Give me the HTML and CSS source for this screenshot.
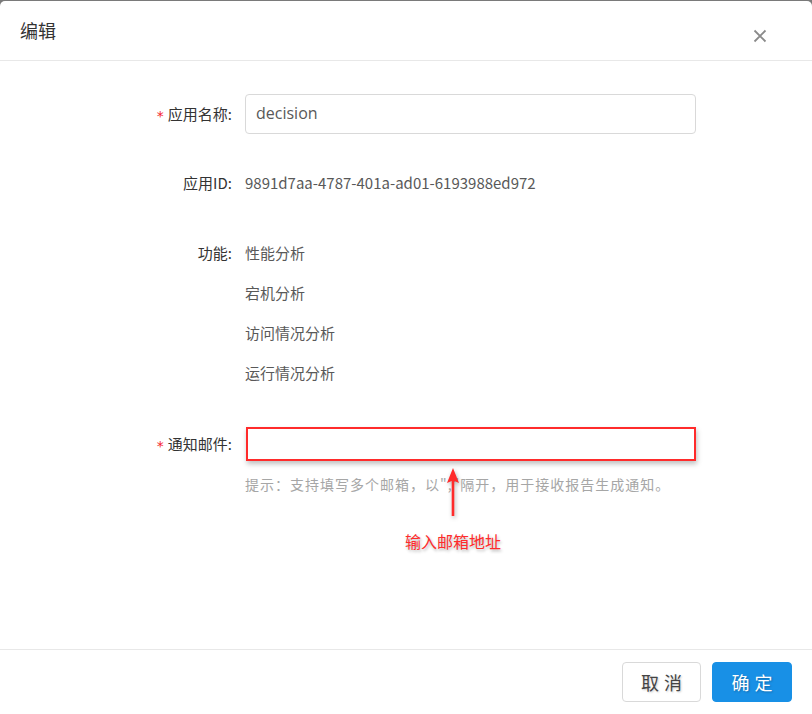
FILE: index.html
```html
<!DOCTYPE html>
<html lang="zh">
<head>
<meta charset="utf-8">
<link rel="stylesheet" href="styles.css">
</head>
<body>
<div class="dialog">
  <div class="header">
    <div class="title">编辑</div>
    <div class="close">
      <svg width="14" height="14" viewBox="0 0 14 14"><path d="M1.5 1.5 L12.5 12.5 M12.5 1.5 L1.5 12.5" stroke="#8a8a8a" stroke-width="1.8" fill="none"/></svg>
    </div>
  </div>
  <div class="body">
    <div class="row row-name">
      <div class="label"><span class="req">*</span>应用名称:</div>
      <div class="field"><div class="input">decision</div></div>
    </div>
    <div class="row row-id">
      <div class="label">应用ID:</div>
      <div class="field value">9891d7aa-4787-401a-ad01-6193988ed972</div>
    </div>
    <div class="row row-func">
      <div class="label">功能:</div>
      <div class="field list">
        <div class="item">性能分析</div>
        <div class="item">宕机分析</div>
        <div class="item">访问情况分析</div>
        <div class="item">运行情况分析</div>
      </div>
    </div>
    <div class="row row-mail">
      <div class="label"><span class="req">*</span>通知邮件:</div>
      <div class="field">
        <div class="input input-red"></div>
        <div class="hint">提示：支持填写多个邮箱，以","隔开，用于接收报告生成通知。</div>
        <div class="annot">
          <svg class="arrow" width="20" height="50" viewBox="0 0 20 50"><path d="M10 1 L16 16 L11.3 14 L11.3 49 L8.7 49 L8.7 14 L4 16 Z" fill="#ff2b2b"/></svg>
          <div class="annot-text">输入邮箱地址</div>
        </div>
      </div>
    </div>
  </div>
  <div class="footer">
    <button class="btn btn-cancel">取消</button>
    <button class="btn btn-ok">确定</button>
  </div>
</div>
</body>
</html>
```
FILE: styles.css
```css
html, body {
  margin: 0;
  padding: 0;
  background: #7a7a7a;
  height: 714px;
  overflow: hidden;
}
body {
  font-family: "Noto Sans CJK SC", "Noto Sans", sans-serif;
  color: #333;
}
.dialog {
  margin-top: 1px;
  height: 713px;
  background: #fff;
  border-radius: 5px 5px 0 0;
  display: flex;
  flex-direction: column;
}
.header {
  height: 59px;
  flex: none;
  border-bottom: 1px solid #e8e8e8;
  display: flex;
  align-items: center;
  justify-content: space-between;
  padding: 0 45px 0 20px;
}
.title {
  font-size: 18px;
  color: #333;
  line-height: 24px;
  margin-top: -2px;
}
.close {
  width: 14px;
  height: 14px;
  margin-top: 11px;
  display: flex;
}
.body {
  flex: 1;
  padding-top: 33px;
}
.row {
  display: flex;
  align-items: flex-start;
}
.label {
  width: 237px;
  padding-right: 5px;
  box-sizing: border-box;
  text-align: right;
  font-size: 15px;
  color: #333;
  line-height: 40px;
}
.req {
  color: #f5222d;
  font-size: 14px;
  margin-right: 4px;
  font-family: "DejaVu Sans", sans-serif;
  position: relative;
  top: 1px;
}
.field {
  margin-left: 8px;
  width: 451px;
}
.input {
  height: 40px;
  box-sizing: border-box;
  border: 1px solid #d9d9d9;
  border-radius: 4px;
  padding: 0 10px;
  font-size: 16px;
  line-height: 37px;
  color: #595959;
  font-family: "Open Sans", "Noto Sans", sans-serif;
}
.value {
  font-size: 15px;
  line-height: 40px;
  color: #595959;
}
.row-id { margin-top: 28px; }
.row-func { margin-top: 30px; }
.list .item {
  font-size: 15px;
  line-height: 40px;
  color: #595959;
}
.row-mail { margin-top: 34px; }
.row-mail .label { line-height: 34px; }
.input-red {
  height: 34px;
  border: 2px solid #ff2b2b;
  border-radius: 0;
  margin-left: 1px;
  box-shadow: 1px 3px 5px rgba(0,0,0,0.25);
}
.hint {
  margin-top: 11px;
  font-size: 14px;
  line-height: 24px;
  color: #a6a6a6;
  letter-spacing: 1px;
}
.annot {
  display: flex;
  flex-direction: column;
  align-items: center;
  width: 416px;
  margin-top: -29px;
  position: relative;
}
.arrow {
  filter: drop-shadow(1px 2px 2px rgba(0,0,0,0.3));
  position: relative;
  z-index: 1;
}
.annot-text {
  margin-top: 12px;
  font-size: 16px;
  color: #ff2b2b;
  text-shadow: 1px 2px 3px rgba(0,0,0,0.3);
  line-height: 24px;
}
.footer {
  height: 65px;
  flex: none;
  box-sizing: border-box;
  border-top: 1px solid #e8e8e8;
  display: flex;
  justify-content: flex-end;
  align-items: flex-start;
  padding: 12px 20px 0 0;
  gap: 11px;
}
.btn {
  height: 40px;
  border-radius: 4px;
  font-family: "Noto Sans CJK SC", sans-serif;
  font-size: 18px;
  letter-spacing: 5px;
  padding: 0 10px 0 15px;
  cursor: pointer;
}
.btn-cancel {
  width: 79px;
  background: #fff;
  border: 1px solid #d9d9d9;
  color: #444;
  text-shadow: 1px 1px 2px rgba(0,0,0,0.2);
}
.btn-ok {
  width: 80px;
  background: #1890e6;
  border: 1px solid #1890e6;
  color: #fff;
  text-shadow: 1px 1px 2px rgba(0,0,0,0.25);
}
```
